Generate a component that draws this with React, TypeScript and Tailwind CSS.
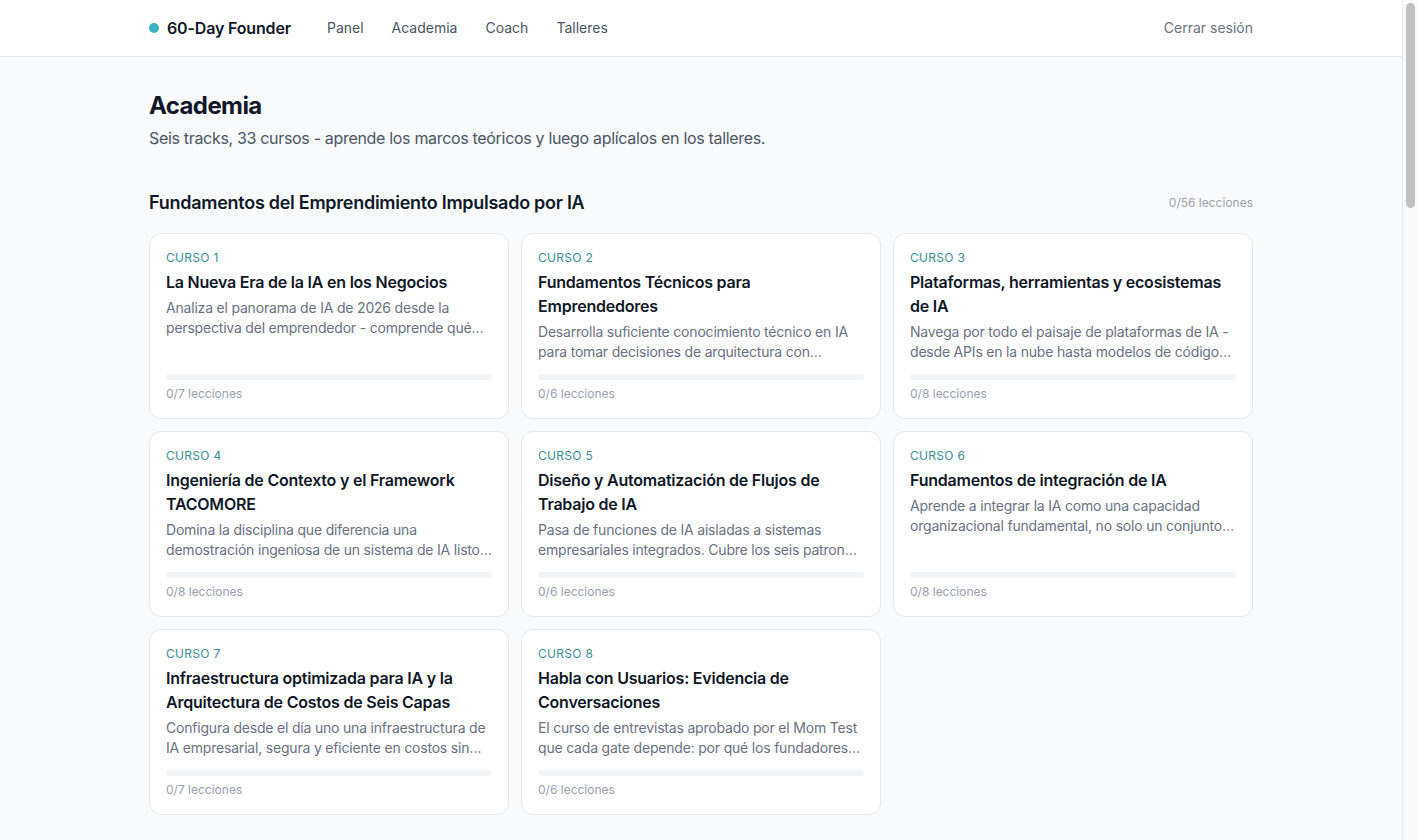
import React from 'react';

type Course = {
  n: number;
  title: string;
  desc: string;
  lessons: number;
};

type Track = {
  name: string;
  total: number;
  courses: Course[];
};

const tracks: Track[] = [
  {
    name: 'Fundamentos del Emprendimiento Impulsado por IA',
    total: 56,
    courses: [
      {
        n: 1,
        title: 'La Nueva Era de la IA en los Negocios',
        desc: 'Analiza el panorama de IA de 2026 desde la perspectiva del emprendedor - comprende qué está cambiando, por qué importa y cómo aprovecharlo.',
        lessons: 7
      },
      {
        n: 2,
        title: 'Fundamentos Técnicos para Emprendedores',
        desc: 'Desarrolla suficiente conocimiento técnico en IA para tomar decisiones de arquitectura con confianza y hablar con ingenieros.',
        lessons: 6
      },
      {
        n: 3,
        title: 'Plataformas, herramientas y ecosistemas de IA',
        desc: 'Navega por todo el paisaje de plataformas de IA - desde APIs en la nube hasta modelos de código abierto y herramientas locales.',
        lessons: 8
      },
      {
        n: 4,
        title: 'Ingeniería de Contexto y el Framework TACOMORE',
        desc: 'Domina la disciplina que diferencia una demostración ingeniosa de un sistema de IA listo para producción.',
        lessons: 8
      },
      {
        n: 5,
        title: 'Diseño y Automatización de Flujos de Trabajo de IA',
        desc: 'Pasa de funciones de IA aisladas a sistemas empresariales integrados. Cubre los seis patrones de flujo de trabajo más comunes.',
        lessons: 6
      },
      {
        n: 6,
        title: 'Fundamentos de integración de IA',
        desc: 'Aprende a integrar la IA como una capacidad organizacional fundamental, no solo un conjunto de herramientas sueltas.',
        lessons: 8
      },
      {
        n: 7,
        title: 'Infraestructura optimizada para IA y la Arquitectura de Costos de Seis Capas',
        desc: 'Configura desde el día uno una infraestructura de IA empresarial, segura y eficiente en costos sin sobrecargar tu presupuesto.',
        lessons: 7
      },
      {
        n: 8,
        title: 'Habla con Usuarios: Evidencia de Conversaciones',
        desc: 'El curso de entrevistas aprobado por el Mom Test que cada gate depende: por qué los fundadores fallan al hablar con clientes.',
        lessons: 6
      }
    ]
  },
  {
    name: 'Validación y Descubrimiento de Clientes',
    total: 34,
    courses: [
      {
        n: 9,
        title: 'Definición del Problema y Segmentos',
        desc: 'Identifica el problema que vale la pena resolver y el segmento de clientes que más lo sufre.',
        lessons: 6
      },
      {
        n: 10,
        title: 'Experimentos de Validación Rápida',
        desc: 'Diseña experimentos baratos y rápidos para probar tus hipótesis más riesgosas antes de construir.',
        lessons: 7
      },
      {
        n: 11,
        title: 'Propuesta de Valor y Posicionamiento',
        desc: 'Convierte lo aprendido en una propuesta de valor clara que tus clientes entiendan en segundos.',
        lessons: 7
      },
      {
        n: 12,
        title: 'Métricas de Tracción Temprana',
        desc: 'Mide lo que importa en las primeras semanas y evita las métricas de vanidad.',
        lessons: 6
      },
      {
        n: 13,
        title: 'Precios y Disposición a Pagar',
        desc: 'Descubre cuánto están dispuestos a pagar tus clientes y diseña tu primera estrategia de precios.',
        lessons: 8
      }
    ]
  },
  {
    name: 'Construcción del Producto con IA',
    total: 40,
    courses: [
      {
        n: 14,
        title: 'Prototipado con IA',
        desc: 'Construye prototipos funcionales en días usando herramientas de IA generativa.',
        lessons: 7
      },
      {
        n: 15,
        title: 'Arquitectura de Agentes',
        desc: 'Diseña agentes confiables con herramientas, memoria y evaluación continua.',
        lessons: 8
      },
      {
        n: 16,
        title: 'Evaluación y Calidad de Modelos',
        desc: 'Crea conjuntos de evaluación para medir la calidad de tu sistema de IA.',
        lessons: 6
      },
      {
        n: 17,
        title: 'Seguridad y Privacidad de Datos',
        desc: 'Protege los datos de tus clientes y cumple con la regulación desde el inicio.',
        lessons: 7
      },
      {
        n: 18,
        title: 'Lanzamiento del MVP',
        desc: 'Planifica y ejecuta el lanzamiento de tu producto mínimo viable.',
        lessons: 6
      },
      {
        n: 19,
        title: 'Iteración basada en Datos',
        desc: 'Usa datos de uso para priorizar tu roadmap y mejorar el producto.',
        lessons: 6
      }
    ]
  }
];

const Card = ({ c }: { c: Course }) => (
  <div className="flex flex-col rounded-xl border border-gray-200 bg-white p-4">
    <div className="text-xs leading-4 uppercase tracking-wide text-[#3a8f96]">
      Curso {c.n}
    </div>
    <h3 className="mt-1 text-base leading-6 font-semibold tracking-[-0.014em] text-gray-900">
      {c.title}
    </h3>
    <p className="mt-1 text-sm leading-5 tracking-[-0.014em] text-gray-500 line-clamp-2">
      {c.desc}
    </p>
    <div className="mt-auto pt-3">
      <div className="h-1.5 w-full rounded-full bg-gray-100"></div>
      <div className="mt-1.5 text-xs leading-4 text-gray-400">
        0/{c.lessons} lecciones
      </div>
    </div>
  </div>
);

export default function App() {
  return (
    <div
      className="min-h-screen bg-gray-50 pr-[15px] text-gray-900"
      style={{ fontFamily: 'Inter, "Noto Sans", sans-serif' }}
    >
      <header className="h-[57px] border-b border-gray-200 bg-white">
        <div className="mx-auto flex h-full max-w-6xl items-center justify-between px-6">
          <div className="flex items-center">
            <div className="flex items-center gap-2">
              <span className="h-2.5 w-2.5 rounded-full bg-[#3bb3c3]"></span>
              <span className="text-base font-semibold tracking-[-0.01em] text-gray-900">60-Day Founder</span>
            </div>
            <nav className="ml-9 flex items-center gap-7 text-sm text-gray-600">
              <a>Panel</a>
              <a>Academia</a>
              <a>Coach</a>
              <a>Talleres</a>
            </nav>
          </div>
          <button className="text-sm text-gray-500">Cerrar sesión</button>
        </div>
      </header>

      <main className="mx-auto max-w-6xl px-6 pt-[33px] pb-16">
        <h1 className="text-2xl font-bold tracking-tight text-gray-900">Academia</h1>
        <p className="mt-1 text-base tracking-[-0.02em] text-gray-600">
          Seis tracks, 33 cursos - aprende los marcos teóricos y luego aplícalos en los talleres.
        </p>

        {tracks.map((t, i) => (
          <section key={t.name} className={i === 0 ? 'mt-[39px]' : 'mt-12'}>
            <div className="mb-4 flex items-center justify-between">
              <h2 className="text-lg font-semibold tracking-[-0.015em] text-gray-900">{t.name}</h2>
              <span className="text-xs text-gray-400">0/{t.total} lecciones</span>
            </div>
            <div className="grid grid-cols-3 gap-3">
              {t.courses.map((c) => (
                <Card key={c.n} c={c} />
              ))}
            </div>
          </section>
        ))}
      </main>

      {/* window scrollbar */}
      <div className="fixed top-0 right-0 h-screen w-[15px] border-l border-gray-200 bg-[#fafafa]">
        <div className="mx-auto mt-[3px] h-[205px] w-[9px] rounded-full bg-[#c1c1c1]"></div>
      </div>
    </div>
  );
}
